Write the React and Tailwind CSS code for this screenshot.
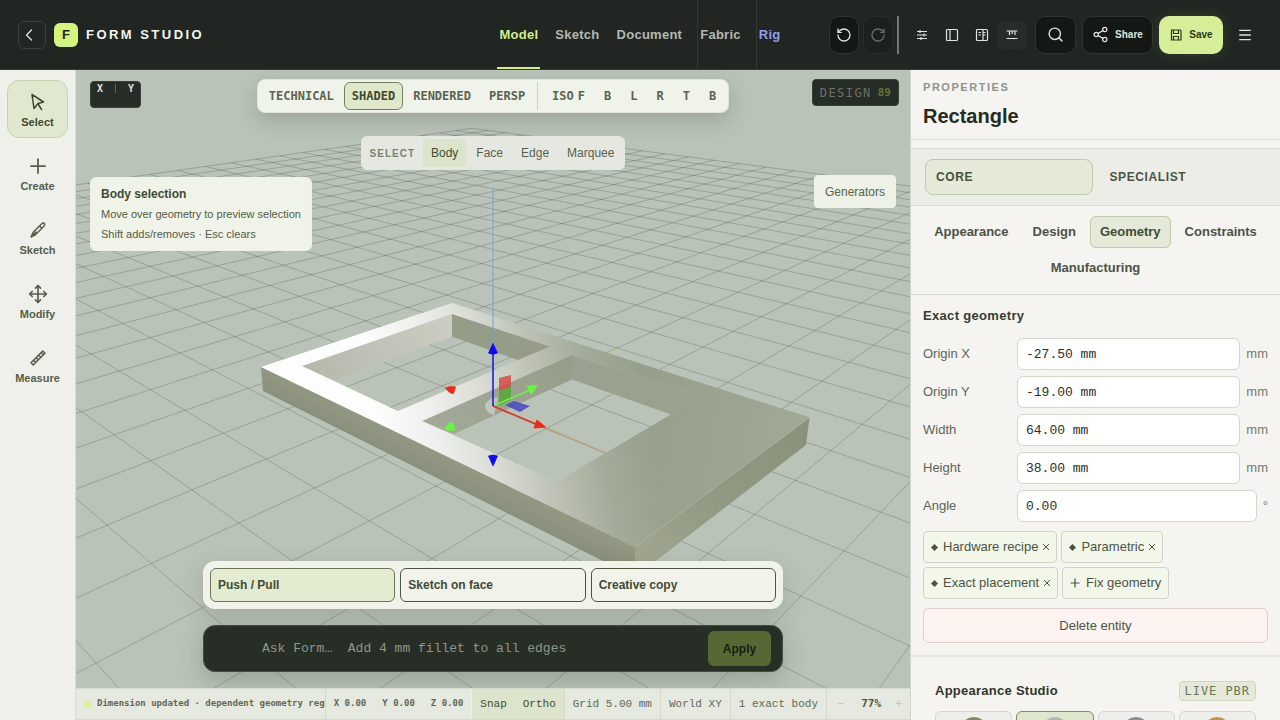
import React from "react";
import { ChevronLeft, RotateCcw, RotateCw, Search, Share2, Menu, Move, Plus } from "lucide-react";

const MONO = "font-['DejaVu_Sans_Mono',monospace]";
const CODE = "font-['Liberation_Mono',monospace]";

/* Ground grid: projects plane coordinates onto the scene's drawing area. */
function project(a, b) {
  const w = 1 + 0.0595 * a + 0.056 * b;
  return [(223.3 + 81.5 * a - 28 * b) / w, 433.3 / w];
}
const MIN_W = 0.5;
const A_RANGE = [-17, 23];
const B_RANGE = [-22, 18];

function gridLines() {
  const parts = [];
  for (let a = A_RANGE[0]; a <= A_RANGE[1]; a++) {
    const from = Math.max(B_RANGE[0], (MIN_W - 1 - 0.0595 * a) / 0.056);
    if (from < B_RANGE[1]) parts.push([project(a, from), project(a, B_RANGE[1])]);
  }
  for (let b = B_RANGE[0]; b <= B_RANGE[1]; b++) {
    const from = Math.max(A_RANGE[0], (MIN_W - 1 - 0.056 * b) / 0.0595);
    if (from < A_RANGE[1]) parts.push([project(from, b), project(A_RANGE[1], b)]);
  }
  return parts
    .map(([p, q]) => `M${p[0].toFixed(1)} ${p[1].toFixed(1)}L${q[0].toFixed(1)} ${q[1].toFixed(1)}`)
    .join("");
}
const GRID = gridLines();

const TOP_FACE =
  "M261 367L452 303L809.5 417.5L635 547ZM302 366L398 411L550 346.5L452 314ZM422 421L557 481.5L701.5 396.5L572 355Z";

function Scene() {
  return (
    <svg
      className="absolute inset-0 h-full w-full"
      viewBox="76 70 834 650"
      preserveAspectRatio="xMidYMid slice"
      aria-hidden="true"
    >
      <defs>
        <linearGradient id="top" gradientUnits="userSpaceOnUse" x1="375" y1="410" x2="640" y2="360">
          <stop offset="0" stopColor="#fdfdfd" />
          <stop offset="0.2" stopColor="#eff0ed" />
          <stop offset="0.4" stopColor="#dadcd5" />
          <stop offset="0.6" stopColor="#bdc2b5" />
          <stop offset="0.8" stopColor="#a3ab99" />
          <stop offset="1" stopColor="#969f8b" />
        </linearGradient>
        <linearGradient id="glow" gradientUnits="userSpaceOnUse" x1="640" y1="400" x2="800" y2="430">
          <stop offset="0" stopColor="#a4aa98" stopOpacity="0" />
          <stop offset="1" stopColor="#a4aa98" stopOpacity="0.8" />
        </linearGradient>
        <linearGradient id="front" gradientUnits="userSpaceOnUse" x1="440" y1="450" x2="425" y2="480">
          <stop offset="0" stopColor="#949984" />
          <stop offset="1" stopColor="#868d78" />
        </linearGradient>
        <linearGradient id="side" gradientUnits="userSpaceOnUse" x1="800" y1="430" x2="650" y2="560">
          <stop offset="0" stopColor="#8b927c" />
          <stop offset="0.6" stopColor="#929a84" />
          <stop offset="1" stopColor="#a0a68f" />
        </linearGradient>
        <linearGradient id="wallL" gradientUnits="userSpaceOnUse" x1="310" y1="375" x2="452" y2="325">
          <stop offset="0" stopColor="#b5b9ac" />
          <stop offset="1" stopColor="#cccdc2" />
        </linearGradient>
        <linearGradient id="wallM" gradientUnits="userSpaceOnUse" x1="430" y1="425" x2="572" y2="370">
          <stop offset="0" stopColor="#a3a998" />
          <stop offset="1" stopColor="#969e8a" />
        </linearGradient>
      </defs>
      <rect x="-1000" y="-1000" width="3000" height="3000" fill="#bac3b8" />
      <path d={GRID} fill="none" stroke="#3d453d" strokeOpacity="0.38" strokeWidth="0.7" />

      <path d="M302 366L452 314V336.5L335 380.5Z" fill="url(#wallL)" />
      <path d="M452 314L550 346.5L519 360.5L452 336.5Z" fill="#959c87" />
      <path d="M422 421L572 355V379.5L454 434Z" fill="url(#wallM)" />
      <path d="M572 355L701.5 396.5L671 414.5L572 379.5Z" fill="#9aa28f" />
      <path d="M261 367L635 547V577L263 391Z" fill="url(#front)" />
      <path d="M809.5 417.5L635 547V577L806 445Z" fill="url(#side)" />
      <path fillRule="evenodd" fill="url(#top)" d={TOP_FACE} />
      <path fillRule="evenodd" fill="url(#glow)" d={TOP_FACE} />
      <path d="M809.5 417.5L635 547" stroke="#b0b39c" strokeWidth="0.8" />
      <path d="M609 352.5L618 349" stroke="#c4ca8a" />
      <path d="M545 427L606 453" stroke="#c99f68" strokeWidth="1" />

      <path d="M493 188V345" stroke="#6fa5d0" strokeWidth="1" />
      <path d="M498 398A12 12 0 0 0 485 405Q485 413 494 415Z" fill="#c7cbc2" opacity="0.85" />
      <path d="M499 378L511 375V387L499 391Z" fill="#d64b47" opacity="0.85" />
      <path d="M499 391L511 386V400L499 406Z" fill="#55a832" opacity="0.85" />
      <path d="M505 405L514 401L530 406L520 412Z" fill="#4646c8" opacity="0.85" />
      <path d="M493 406L532 389" stroke="#66f743" strokeWidth="1.5" />
      <path d="M527 386L537 385.5L534 391L531 394Z" fill="#66f743" stroke="#66f743" strokeLinejoin="round" />
      <path d="M493 406L536 424" stroke="#f02818" strokeWidth="1.5" />
      <path d="M537 420L545.500 427L534 428Z" fill="#f02818" stroke="#f02818" strokeLinejoin="round" />
      <path d="M493 406V352" stroke="#1212e0" strokeWidth="1.5" />
      <path d="M493 343.5L497.5 353Q493 355.500 488.5 353Z" fill="#0c0cee" stroke="#0c0cee" strokeWidth="0.8" strokeLinejoin="round" />
      <path d="M493 466L497.5 456Q493 454 488.5 456Z" fill="#0c0cee" stroke="#0c0cee" strokeWidth="0.8" strokeLinejoin="round" />
      <path d="M445.500 388Q450 385.500 455.500 387L453.500 393.500Q451 393.500 449 392Z" fill="#f02818" stroke="#f02818" strokeWidth="0.8" strokeLinejoin="round" />
      <path d="M444.500 429L450 422Q454.500 423 455 430Q449 431 444.500 429Z" fill="#66f743" stroke="#66f743" strokeWidth="0.8" strokeLinejoin="round" />
    </svg>
  );
}

const toolIcon = {
  width: 20,
  height: 20,
  viewBox: "0 0 20 20",
  fill: "none",
  stroke: "currentColor",
  strokeWidth: 1.5,
  strokeLinejoin: "round",
  strokeLinecap: "round",
};
function CursorIcon() {
  return (
    <svg {...toolIcon}>
      <path d="M4 2.5L15.5 10L10 11.500L6 16.500ZM10.200 12L13.500 17.500" />
    </svg>
  );
}
function PenIcon() {
  return (
    <svg {...toolIcon}>
      <path d="M3 17L5.200 12.200L13.500 4Q15.500 2.300 16.500 3.500Q17.300 4.600 15.700 6.500L7.600 14.500ZM11.500 6L13.800 8.300M4 16L8 12" />
    </svg>
  );
}
function RulerIcon() {
  return (
    <svg {...toolIcon}>
      <path d="M3 14.800L14.800 3L17 5.200L5.200 17ZM5.500 12L7.500 14M8 9.500L10 11.500M10.500 7L12.500 9M13 4.500L15 6.500" />
    </svg>
  );
}

const smallIcon = { width: 14, height: 14, viewBox: "0 0 14 14", fill: "none", stroke: "currentColor", strokeWidth: 1.2 };
function TuneIcon() {
  return (
    <svg {...smallIcon}>
      <path d="M2 3.500H12M2 7H12M2 10.500H12M5 2V5M9 5.500V8.500M6 9V12" />
    </svg>
  );
}
function PanelIcon() {
  return (
    <svg {...smallIcon}>
      <rect x="1.5" y="1.5" width="11" height="11" rx="1" />
      <path d="M5 1.500V12.500" />
    </svg>
  );
}
function InspectorIcon() {
  return (
    <svg {...smallIcon}>
      <rect x="1.5" y="1.5" width="11" height="11" rx="1" />
      <path d="M8 1.500V12.500M3.500 4.500H6M3.500 7H6M8 4.500H10.500M8 7H10.500" />
    </svg>
  );
}
function DockIcon() {
  return (
    <svg {...smallIcon}>
      <path d="M1.500 3H12.500M1.500 10.500H12.500M4.500 3V7M7.200 3V6M10 3V7" />
    </svg>
  );
}
function SaveIcon() {
  return (
    <svg {...smallIcon}>
      <path d="M2.500 2H11L12 3V12H2.500ZM4.500 2V5.500H9.500V2M4.500 12V8.500H9.500V12" />
    </svg>
  );
}

const MODES = [
  { name: "Model", style: "px-0.5 text-[#d3ee88] after:absolute after:inset-x-0 after:bottom-0 after:h-0.5 after:bg-[#d3ee88]" },
  { name: "Sketch", style: "px-0.5 text-[#b3b8b1]" },
  { name: "Document", style: "px-0.5 text-[#b3b8b1]" },
  { name: "Fabric", style: "border-l border-[#343934] px-0.5 text-[#b3b8b1]" },
  { name: "Rig", style: "border-l border-[#343934] px-0.5 text-[#8f9ff0]" },
];

const LAYOUTS = [
  { label: "Adjust", Icon: TuneIcon },
  { label: "Browser panel", Icon: PanelIcon },
  { label: "Inspector panel", Icon: InspectorIcon },
  { label: "Dock", Icon: DockIcon, active: true },
];

function Header() {
  const darkButton = "flex h-[38px] items-center justify-center rounded-[10px] border border-[#2f342f] bg-[#141814] text-[#dfe3dc]";
  return (
    <header className="grid h-[70px] shrink-0 grid-cols-[1fr_auto_1fr] border-b border-[#353b34] bg-[#212622]">
      <div className="flex items-center gap-2 pl-[18px]">
        <button aria-label="Back" className="flex h-7 w-7 items-center rounded-md border border-[#3b403b] text-[#dfe3dc]">
          <ChevronLeft size={20} strokeWidth={1.5} />
        </button>
        <span className="flex h-6 w-6 items-center justify-center rounded-md bg-[#d3f57e] text-[13px] font-bold text-[#1f261b]">F</span>
        <span className="text-[13px] font-bold tracking-[0.19em] text-[#f3f5f0]">FORM STUDIO</span>
      </div>
      <nav className="flex gap-[13px] text-[13px] font-bold tracking-[0.02em]">
        {MODES.map((m) => (
          <button key={m.name} className={`relative ${m.style}`}>
            {m.name}
          </button>
        ))}
      </nav>
      <div className="flex items-center justify-end pr-[21px]">
        <button aria-label="Undo" className={`${darkButton} mr-1 w-[30px]`}>
          <RotateCcw size={16} strokeWidth={2} />
        </button>
        <button aria-label="Redo" className="flex h-[38px] w-[30px] items-center justify-center rounded-[10px] border border-[#292e29] bg-[#1c211d] text-[#686d67]">
          <RotateCw size={16} strokeWidth={2} />
        </button>
        <span className="ml-1 h-[38px] w-0.5 bg-[#737872]" />
        <div className="mx-2 flex w-[120px]">
          {LAYOUTS.map(({ label, Icon, active }) => (
            <button
              key={label}
              aria-label={label}
              className={`flex h-7 flex-1 items-center justify-center rounded-md text-[#dfe3dc] ${active ? "bg-[#272d28]" : ""}`}
            >
              <Icon />
            </button>
          ))}
        </div>
        <button aria-label="Search" className={`${darkButton} mr-1.5 w-[41px]`}>
          <Search size={17} strokeWidth={2} />
        </button>
        <button className={`${darkButton} mr-1.5 w-[71px] gap-1.5 text-[10px] font-bold`}>
          <Share2 size={17} strokeWidth={1.75} />
          Share
        </button>
        <button className="mr-2 flex h-[38px] w-16 items-center justify-center gap-1.5 rounded-[10px] bg-[#d5ee97] text-[10px] font-bold text-[#2b3a1c] shadow-[0_0_14px_rgba(213,238,151,0.12)]">
          <SaveIcon />
          Save
        </button>
        <button aria-label="Menu" className="flex h-7 w-7 items-center justify-center text-[#dfe3dc]">
          <Menu size={16} strokeWidth={2} />
        </button>
      </div>
    </header>
  );
}

const TOOLS = [
  { name: "Select", icon: <CursorIcon />, active: true },
  { name: "Create", icon: <Plus size={24} strokeWidth={1.75} className="-my-0.5" /> },
  { name: "Sketch", icon: <PenIcon /> },
  { name: "Modify", icon: <Move size={20} strokeWidth={2} /> },
  { name: "Measure", icon: <RulerIcon /> },
];

function Toolbar() {
  return (
    <aside className="flex w-[76px] shrink-0 flex-col gap-1.5 border-r border-[#d9dcd3] bg-[#eff0e9] px-[7px] pt-2.5">
      {TOOLS.map((t) => (
        <button
          key={t.name}
          className={`flex h-[58px] flex-col items-center justify-center gap-0.5 rounded-xl border pt-[3px] text-[11px] font-bold leading-4 ${
            t.active ? "border-[#c6d5ae] bg-[#e0e9cf] text-[#3c4a2e]" : "border-transparent text-[#555e4c]"
          }`}
        >
          {t.icon}
          {t.name}
        </button>
      ))}
    </aside>
  );
}

function ViewBar() {
  return (
    <div className={`flex h-[34px] items-center rounded-lg border border-[#e2e6da] bg-[#f0f3e9] pl-[3px] pr-3 text-[12px] font-bold text-[#5a6350] shadow-[0_8px_20px_rgba(50,60,45,0.22)] ${MONO}`}>
      <div className="flex gap-0.5">
        {["TECHNICAL", "SHADED", "RENDERED", "PERSP"].map((v) => (
          <button
            key={v}
            className={`h-7 rounded-md border px-[7px] ${v === "SHADED" ? "border-[#75825c] bg-[#dfe8cb] text-[#3c4a2e]" : "border-transparent"}`}
          >
            {v}
          </button>
        ))}
      </div>
      <span className="ml-1 mr-3.5 h-7 w-px bg-[#ced3c6]" />
      <button>ISO</button>
      <div className="ml-1 flex gap-[19px]">
        {["F", "B", "L", "R", "T", "B"].map((v, i) => (
          <button key={i}>{v}</button>
        ))}
      </div>
    </div>
  );
}

function SelectBar() {
  return (
    <div className="flex h-[34px] items-center gap-0.5 rounded-md border border-[#e4e7df] bg-[#e5e8e0] pl-2 pr-0.5 text-[12px] text-[#59614f]">
      <span className="mr-1.5 text-[10px] font-bold tracking-widest text-[#7b8174]">SELECT</span>
      {["Body", "Face", "Edge", "Marquee"].map((s) => (
        <button key={s} className={`h-7 rounded-sm px-2 ${s === "Body" ? "bg-[#dbe4cb] text-[#3f4d30]" : ""}`}>
          {s}
        </button>
      ))}
    </div>
  );
}

function StatusBar() {
  const cell = "flex items-center border-l border-[#d5dacd] px-2";
  return (
    <footer className={`absolute inset-x-0 bottom-0 flex h-8 border-y border-[#d5dacf] bg-[#e5e9df] text-[11px] text-[#5f6856] ${CODE}`}>
      <div className="flex min-w-0 flex-1 items-center gap-1.5 pl-2 text-[9px] font-bold">
        <span className="h-[7px] w-[7px] shrink-0 rounded-full bg-[#daf28d]" />
        <span className={`whitespace-nowrap ${MONO}`}>Dimension updated · dependent geometry reg</span>
      </div>
      <div className={`${cell} gap-4 whitespace-nowrap text-[9px] font-bold ${MONO}`}>
        <span>X 0.00</span>
        <span>Y 0.00</span>
        <span>Z 0.00</span>
      </div>
      <div className="flex items-center gap-4 border-l border-[#eef1e8] bg-[#dce5cb] px-2 text-[#3f4d30]">
        <button>Snap</button>
        <button>Ortho</button>
      </div>
      <span className={`${cell} whitespace-nowrap`}>Grid 5.00 mm</span>
      <span className={`${cell} whitespace-nowrap`}>World XY</span>
      <span className={`${cell} whitespace-nowrap`}>1 exact body</span>
      <div className={`${cell} w-[84px] justify-between text-[#c0c5ba]`}>
        <button aria-label="Zoom out" className="w-3 text-center">−</button>
        <span className={`font-bold text-[#4e5746] ${MONO}`}>77%</span>
        <button aria-label="Zoom in">+</button>
      </div>
    </footer>
  );
}

function Viewport() {
  return (
    <main className="relative min-w-0 flex-1 overflow-hidden">
      <Scene />
      <div className={`absolute left-3.5 top-[11px] flex h-[27px] w-[51px] justify-around rounded border border-[#3a403a] bg-[#262c26] pt-0.5 text-[10px] font-bold leading-[10px] text-[#dfe3dc] ${MONO}`}>
        <span>X</span>
        <span className="h-[9px] w-px bg-[#5d635c]" />
        <span>Y</span>
      </div>
      <div className="absolute inset-x-0 top-[9px] flex flex-col items-center gap-[23px]">
        <ViewBar />
        <SelectBar />
      </div>
      <div className={`absolute right-[11px] top-[9px] flex h-[27px] items-center gap-1.5 rounded border border-[#3a403a] bg-[#262c26] px-[7px] text-[12px] leading-4 text-[#6b7069] ${MONO}`}>
        <span className="tracking-[0.12em]">DESIGN</span>
        <span className="text-[11px] font-bold text-[#62763a]">89</span>
      </div>
      <div className="absolute left-3.5 top-[107px] rounded-md border border-[#eef1e6] bg-[#f0f3e8] px-2.5 py-1.5 text-[11px] leading-5 text-[#525c47]">
        <p className="text-[12px] font-bold text-[#3f4b34]">Body selection</p>
        <p>Move over geometry to preview selection</p>
        <p>Shift adds/removes · Esc clears</p>
      </div>
      <button className="absolute right-3.5 top-[105px] h-[33px] rounded border border-[#f0f2ea] bg-[#edf1e6] px-2.5 text-[12px] text-[#59634e]">
        Generators
      </button>

      <div className="absolute inset-x-0 bottom-12 flex flex-col items-center gap-4">
        <div className="grid w-[580px] grid-cols-3 gap-[5px] rounded-xl bg-[#f1f3ea] p-[7px] shadow-[0_8px_24px_rgba(50,60,45,0.18)]">
          {["Push / Pull", "Sketch on face", "Creative copy"].map((a, i) => (
            <button
              key={a}
              className={`h-[34px] rounded-md border px-[7px] text-left text-[12px] font-bold text-[#404b34] ${
                i === 0 ? "border-[#6d7857] bg-[#e3ecd0]" : "border-[#4b5343]"
              }`}
            >
              {a}
            </button>
          ))}
        </div>
        <form
          onSubmit={(e) => e.preventDefault()}
          className="flex h-[47px] w-[580px] items-center rounded-xl border border-[#454c43] bg-[#272e26] pl-[58px] pr-[11px] shadow-[0_8px_24px_rgba(50,60,45,0.25)]"
        >
          <input
            aria-label="Ask Form"
            placeholder={"Ask Form…\u00a0 Add 4 mm fillet to all edges"}
            className={`min-w-0 flex-1 bg-transparent text-[13px] text-[#e4e8df] outline-none placeholder:text-[#8f968b] ${CODE}`}
          />
          <button className="h-[35px] w-[63px] rounded-md bg-[#566934] text-[12px] font-bold text-[#172010]">Apply</button>
        </form>
      </div>
      <StatusBar />
    </main>
  );
}

const FIELDS = [
  { id: "origin-x", label: "Origin X", value: "-27.50 mm", unit: "mm" },
  { id: "origin-y", label: "Origin Y", value: "-19.00 mm", unit: "mm" },
  { id: "width", label: "Width", value: "64.00 mm", unit: "mm" },
  { id: "height", label: "Height", value: "38.00 mm", unit: "mm" },
  { id: "angle", label: "Angle", value: "0.00", unit: "°" },
];
const TAGS = ["Hardware recipe", "Parametric", "Exact placement"];
const MATERIALS = [
  { name: "Olive", ball: "from-[#838c66] to-[#565e42]" },
  { name: "Silver", ball: "from-[#b4b9ba] to-[#8f9592]", active: true },
  { name: "Steel", ball: "from-[#8d8d96] to-[#66656e]" },
  { name: "Brass", ball: "from-[#c8944a] to-[#8f6528]" },
];

function Properties() {
  const chip = "flex h-8 items-center rounded border border-[#ced5c5] bg-[#f3f7ea] text-[13px] text-[#4b5443]";
  return (
    <aside className="w-[370px] shrink-0 overflow-hidden border-l border-[#d3d6cf] bg-[#f5f4f0] text-[13px] text-[#4b5345]">
      <div className="border-b border-[#d9dbd4] px-3 pb-[9px] pt-[9px]">
        <p className="text-[11px] font-bold leading-4 tracking-[0.14em] text-[#8f938c]">PROPERTIES</p>
        <h1 className="mt-[7px] text-[20px] font-bold leading-7 text-[#262b24]">Rectangle</h1>
      </div>
      <div className="mt-2 grid grid-cols-2 gap-1.5 border-y border-[#d9dcd3] bg-[#ecede6] px-3.5 py-2.5">
        {["CORE", "SPECIALIST"].map((t, i) => (
          <button
            key={t}
            className={`h-9 rounded-lg border px-2.5 text-left text-[12px] font-bold tracking-wider ${
              i === 0 ? "border-[#bccaa5] bg-[#e4ead7] text-[#45523a]" : "border-transparent"
            }`}
          >
            {t}
          </button>
        ))}
      </div>
      <div className="flex flex-wrap justify-center gap-1 border-b border-[#d9dbd4] px-3 py-2.5">
        {["Appearance", "Design", "Geometry", "Constraints", "Manufacturing"].map((t) => (
          <button
            key={t}
            className={`h-8 rounded-md border px-[9px] font-bold ${
              t === "Geometry" ? "border-[#bccaa5] bg-[#e4ead7] text-[#3f4d30]" : "border-transparent"
            }`}
          >
            {t}
          </button>
        ))}
      </div>
      <section className="border-b-2 border-[#e3e4df] px-3 pb-3 pt-[11px]">
        <h2 className="mb-3 font-bold leading-5 tracking-wide text-[#363d31]">Exact geometry</h2>
        <div className="flex flex-col gap-1.5">
          {FIELDS.map((f) => (
            <div key={f.id} className="flex items-center gap-1.5">
              <label htmlFor={f.id} className="w-[88px] shrink-0 text-[#5d6457]">{f.label}</label>
              <input
                id={f.id}
                defaultValue={f.value}
                className={`h-8 min-w-0 flex-1 rounded-md border border-[#d3d6ce] bg-white px-2 text-[13px] text-[#2b3027] outline-none ${CODE}`}
              />
              <span className="text-[#747a6e]">{f.unit}</span>
            </div>
          ))}
        </div>
        <div className="mt-[9px] flex flex-wrap gap-1">
          {TAGS.map((t) => (
            <button key={t} className={`${chip} gap-1 px-1.5`}>
              <svg width="9" height="9" viewBox="0 0 9 9" fill="currentColor">
                <path d="M4.500 1L8 4.500L4.500 8L1 4.500Z" />
              </svg>
              {t}
              <svg width="8" height="8" viewBox="0 0 8 8" stroke="currentColor" fill="none">
                <path d="M1 1L7 7M7 1L1 7" />
              </svg>
            </button>
          ))}
          <button className={`${chip} gap-1.5 px-[7px]`}>
            <svg width="10" height="10" viewBox="0 0 10 10" stroke="currentColor" fill="none" strokeWidth="1.2">
              <path d="M5 0.500V9.500M0.500 5H9.500" />
            </svg>
            Fix geometry
          </button>
        </div>
        <button className="mt-[9px] h-[35px] w-full rounded-md border border-[#e3cdc9] bg-[#fdf3f0]">Delete entity</button>
      </section>
      <section className="px-6 pt-6">
        <div className="flex items-center justify-between">
          <h2 className="font-bold tracking-[0.02em] text-[#30372b]">Appearance Studio</h2>
          <span className={`rounded border border-[#cdd7bc] bg-[#e4ead7] px-[5px] text-[12px] leading-[18px] tracking-[0.08em] text-[#6b755c] ${MONO}`}>LIVE PBR</span>
        </div>
        <div className="mt-2.5 grid grid-cols-4 gap-1">
          {MATERIALS.map((m) => (
            <button
              key={m.name}
              aria-label={m.name}
              className={`flex h-16 justify-center rounded-md border pt-[5px] ${m.active ? "border-[#7e8d62] bg-[#dfe8cc]" : "border-[#d3d6ce] bg-[#eeefea]"}`}
            >
              <span className={`h-7 w-7 rounded-full bg-linear-to-b ${m.ball}`} />
            </button>
          ))}
        </div>
      </section>
    </aside>
  );
}

export default function App() {
  return (
    <div className="flex h-screen flex-col overflow-hidden font-['Liberation_Sans',Arial,sans-serif]">
      <Header />
      <div className="flex min-h-0 flex-1">
        <Toolbar />
        <Viewport />
        <Properties />
      </div>
    </div>
  );
}
